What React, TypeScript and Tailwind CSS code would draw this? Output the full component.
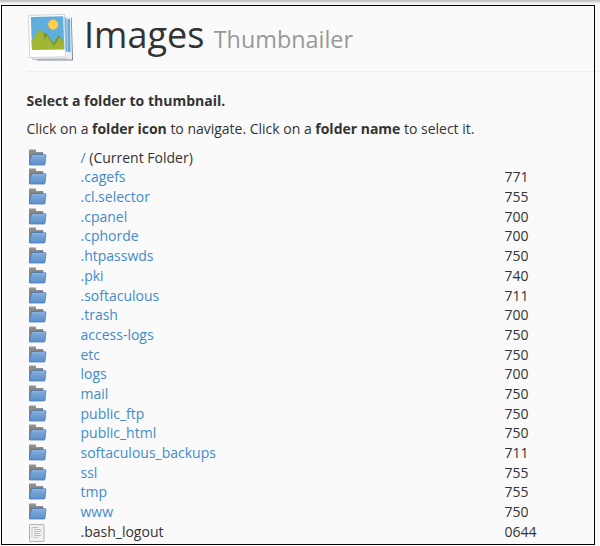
const folders: [string, string][] = [
  ['.cagefs', '771'],
  ['.cl.selector', '755'],
  ['.cpanel', '700'],
  ['.cphorde', '700'],
  ['.htpasswds', '750'],
  ['.pki', '740'],
  ['.softaculous', '711'],
  ['.trash', '700'],
  ['access-logs', '750'],
  ['etc', '750'],
  ['logs', '700'],
  ['mail', '750'],
  ['public_ftp', '750'],
  ['public_html', '750'],
  ['softaculous_backups', '711'],
  ['ssl', '755'],
  ['tmp', '755'],
  ['www', '750'],
];

function ImagesIcon() {
  return (
    <svg width="46" height="48" viewBox="0 0 46 48" className="mt-px block shrink-0">
      <path d="M9 4 43.800 3.500 45 46.500H9z" fill="#7f858b" />
      <path d="M9 3.500 43 3 44 45.600H9z" fill="#eef1f3" />
      <path d="M36 5h6l.5 33H36z" fill="#62a9dc" />
      <path d="M6 2 37.500 1 39.500 45 4 45.500z" fill="#959ca1" />
      <path d="M3.500 1.500 39.300 1 39.500 44.500 4 44.800z" fill="#f6f8fa" />
      <path d="M36 3.500h2.500l.5 34H36z" fill="#62a9dc" />
      <path d="M.4 1.400 36.500.4 37.500 42.800 1.700 43.600z" fill="#fff" stroke="#c5cbd0" strokeWidth=".8" />
      <path d="M2.800 3 35.300 2.200 36.300 35.200 4 35.700z" fill="#60ade0" />
      <path d="M3.500 27 11.700 14.700 16 20 18 18.500 25.500 30 30.500 21 36.200 28.500V35.200L4 35.700z" fill="#a0b735" />
      <path d="m11.700 14.700 4.300 6 .7 6.200 1.800-6L25.700 32l3.300-4.500 1.700-4 5.300 6-5.500-8.500-5 8.500-7.500-11-2 1.500z" fill="#71962a" />
      <circle cx="25.200" cy="10.600" r="4.800" fill="#ffd04e" stroke="#f6b94c" strokeWidth=".8" />
    </svg>
  );
}

function FolderIcon() {
  return (
    <svg width="19" height="18" viewBox="0 0 19 18" className="mt-px ml-[1.500px] block">
      <defs>
        <linearGradient id="folderFront" x2="0" y2="1">
          <stop stopColor="#82addb" />
          <stop offset="1" stopColor="#5d8fcb" />
        </linearGradient>
      </defs>
      <path d="M1 1.500q0-1 1-1h5q1 0 1 1v1.500h6.500q.8 0 .8.800V15.500H1z" fill="#858583" />
      <path d="M1.500 1.500h6M2 4h12" stroke="#999996" />
      <path d="M3 5.200h12" stroke="#6c6c6a" />
      <path d="M3.400 6.500q.1-.8.900-.8H17.300q.7 0 .6.800L17 15.200q-.1.800-.9.800H2q-.8 0-.7-.8z" fill="url(#folderFront)" stroke="#4c7cb9" strokeWidth=".8" />
      <path d="M4.300 6.800H17" stroke="#94bbe4" strokeWidth=".8" />
    </svg>
  );
}

function FileIcon() {
  return (
    <svg width="19" height="20" viewBox="0 0 19 20" className="mt-px ml-[.5px] block">
      <rect x="2.500" y="1.500" width="14.500" height="17" rx=".7" fill="#f0f0ee" stroke="#b3b3b1" />
      <path d="M5 4.500h6M7 6.500h7M7 8.500h7M7 10.500h6M7 12.500h7M7 14.500h4" stroke="#c0c0be" />
      <path d="M5 4v11" stroke="#d2d2d0" />
    </svg>
  );
}

export default function App() {
  return (
    <div className="h-[546px] w-[600px] overflow-hidden bg-[linear-gradient(#c2c2c2_0px,#c4c4c4_1px,#f0f0f0_3px,#fafafa_5px,#fafafa_71px,#eee_71px,#eee_72px,#fafafa_72px)] pt-[5px] pl-px font-['Open_Sans','Noto_Sans',sans-serif] text-[14px] text-[#333]">
      <div className="flex h-[540px] w-[594px] flex-col border border-black bg-[#fafafa] pl-[24.500px]">
        <header className="mr-px flex h-[66px] shrink-0 items-start border-b border-[#eee] pt-[7px] pl-[1.500px]">
          <ImagesIcon />
          <h1 className="ml-[10px] text-[36px] leading-[43px] whitespace-nowrap">
            Images <span className="text-[23.4px] text-[#999]">Thumbnailer</span>
          </h1>
        </header>
        <p className="mt-[19px] h-[20px] shrink-0 font-bold leading-[20px]">Select a folder to thumbnail.</p>
        <p className="mt-[8px] h-[20px] shrink-0 leading-[20px] tracking-[-0.01px] whitespace-nowrap">
          Click on a <b>folder icon</b> to navigate. Click on a <b>folder name</b> to select it.
        </p>
        <div className="mt-[8.700px] grid auto-rows-[19.700px] grid-cols-[54px_424px_1fr] leading-[19.700px]">
          <FolderIcon />
          <span><span className="text-[#428bca]">/</span> (Current Folder)</span>
          <span />
          {folders.map(([name, mode]) => (
            <div key={name} className="contents">
              <FolderIcon />
              <span className="text-[#428bca]">{name}</span>
              <span>{mode}</span>
            </div>
          ))}
          <FileIcon />
          <span>.bash_logout</span>
          <span>0644</span>
        </div>
      </div>
    </div>
  );
}
